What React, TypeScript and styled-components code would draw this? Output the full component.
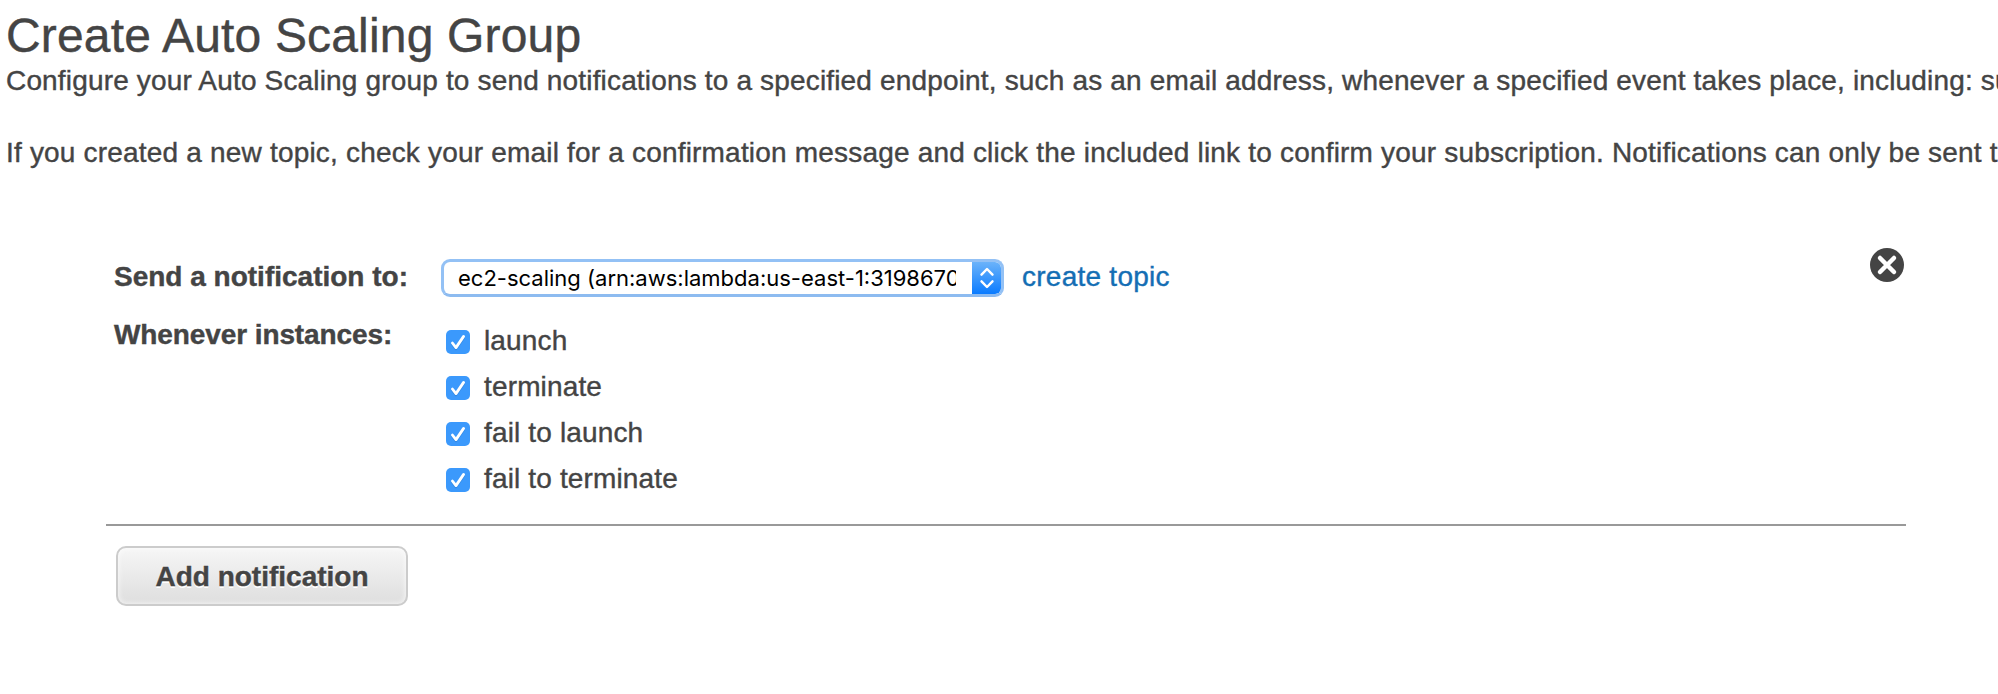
import React, { useState } from 'react';
import styled, { createGlobalStyle } from 'styled-components';

const GlobalStyle = createGlobalStyle`
  html, body { margin: 0; background: #fff; overflow: hidden; }
  * { box-sizing: border-box; }
  svg { display: block; }
`;

const Page = styled.main`
  width: 1998px;
  height: 694px;
  overflow: hidden;
  padding-left: 6px;
  color: #444;
  font: 28px/36px "Liberation Sans", Arial, sans-serif;
  -webkit-text-stroke: 0.4px;
`;

const Title = styled.h1`
  margin: 0;
  padding-top: 9px;
  height: 63px;
  font-size: 48px;
  line-height: 54px;
  font-weight: 400;
  letter-spacing: 0.17px;
  white-space: nowrap;
`;

const Paragraph = styled.p<{ $spacing: number }>`
  margin: 0 0 36px;
  white-space: nowrap;
  letter-spacing: ${(p) => p.$spacing}px;
`;

const Panel = styled.section`
  width: 1800px;
  height: 283px;
  margin: 72px 0 0 100px;
  padding: 15px 1px 0 8px;
  display: flex;
  align-items: flex-start;
  border-bottom: 2px solid #999;
`;

const Fields = styled.div`
  flex: 1;
  display: grid;
  grid-template-columns: 327px 1fr;
  grid-template-rows: 58px auto;
`;

const Label = styled.div<{ $spacing: number }>`
  font-weight: 700;
  padding-top: 1px;
  letter-spacing: ${(p) => p.$spacing}px;
  white-space: nowrap;
`;

const TopicRow = styled.div`
  display: flex;
  align-items: flex-start;
  height: 38px;
`;

const Select = styled.button`
  display: flex;
  width: 563px;
  height: 38px;
  margin-top: 1px;
  padding: 0;
  border: 3px solid #93c1f5;
  border-bottom-color: #8dbbf0;
  border-radius: 9px;
  background: #fff;
  color: #000;
  overflow: hidden;
  font: 22px/33px Inter, Roboto, sans-serif;
  text-align: left;
  -webkit-text-stroke: 0;
`;

const SelectText = styled.span`
  flex: 1;
  margin: 0 16px 0 14px;
  overflow: hidden;
  white-space: nowrap;
`;

const Stepper = styled.span`
  width: 29px;
  height: 32px;
  display: flex;
  align-items: center;
  justify-content: center;
  border-radius: 0 5px 5px 0;
  background: linear-gradient(#6bb3fa, #0a7bff);
`;

const Link = styled.a`
  margin: 1px 0 0 18px;
  color: #146eb4;
  letter-spacing: 0.25px;
  text-decoration: none;
  white-space: nowrap;
`;

const Options = styled.div`
  padding: 7px 0 0 5px;
`;

const Option = styled.label`
  display: flex;
  height: 46px;
  gap: 14px;
  letter-spacing: 0.15px;
`;

const HiddenInput = styled.input`
  appearance: none;
  margin: 0;
  width: 0;
  height: 0;
`;

const Box = styled.span<{ $on: boolean }>`
  width: 24px;
  height: 24px;
  margin: 7px 0 0 -14px;
  border-radius: 5px;
  background: ${(p) => (p.$on ? '#3b99fc' : '#ddd')};
`;

const Remove = styled.button`
  width: 36px;
  height: 36px;
  margin-top: -11px;
  padding: 0;
  border: 0;
  background: none;
`;

const AddButton = styled.button`
  display: block;
  width: 292px;
  height: 60px;
  margin: 20px 0 0 110px;
  padding: 1px 0 0;
  border: 2px solid #ccc;
  border-radius: 10px;
  background: linear-gradient(#f6f6f6, #dedede);
  box-shadow: inset 0 0 5px 1px rgba(255, 255, 255, 0.65);
  color: #444;
  font: 700 28px/55px "Liberation Sans", Arial, sans-serif;
  text-shadow: 0 2px 0 #fff;
`;

const events = ['launch', 'terminate', 'fail to launch', 'fail to terminate'];

function EventOption({ name }: { name: string }) {
  const [on, setOn] = useState(true);
  return (
    <Option>
      <HiddenInput type="checkbox" checked={on} onChange={() => setOn(!on)} />
      <Box $on={on}>
        <svg width="24" height="24" viewBox="0 0 24 24" fill="none" strokeWidth="2.8" strokeLinecap="round" strokeLinejoin="round">
          <path d="M6.4 14.2 10 18.8 17.6 7.6" stroke="#2b7bd0" strokeOpacity=".55" />
          <path d="M6.4 13 10 17.6 17.6 6.4" stroke="#fff" />
        </svg>
      </Box>
      {name}
    </Option>
  );
}

export default function App() {
  return (
    <Page>
      <GlobalStyle />
      <Title>Create Auto Scaling Group</Title>
      <Paragraph $spacing={0.165}>
        Configure your Auto Scaling group to send notifications to a specified endpoint, such as an email address, whenever a specified event takes place, including: su
      </Paragraph>
      <Paragraph $spacing={0.19}>
        If you created a new topic, check your email for a confirmation message and click the included link to confirm your subscription. Notifications can only be sent t
      </Paragraph>
      <Panel>
        <Fields>
          <Label $spacing={0}>Send a notification to:</Label>
          <TopicRow>
            <Select>
              <SelectText>ec2-scaling (arn:aws:lambda:us-east-1:3198670</SelectText>
              <Stepper>
                <svg width="16" height="22" viewBox="0 0 16 22" fill="none" stroke="#fff" strokeWidth="2.4" strokeLinecap="round" strokeLinejoin="round">
                  <path d="M2.5 7.7 8 2l5.5 5.7M2.5 14.3 8 20l5.5-5.7" />
                </svg>
              </Stepper>
            </Select>
            <Link>create topic</Link>
          </TopicRow>
          <Label $spacing={-0.1}>Whenever instances:</Label>
          <Options>
            {events.map((e) => (
              <EventOption key={e} name={e} />
            ))}
          </Options>
        </Fields>
        <Remove aria-label="Remove">
          <svg width="36" height="36" viewBox="0 0 36 36">
            <circle cx="18" cy="18" r="17" fill="#444" />
            <path d="M11 11 25 25M25 11 11 25" stroke="#fff" strokeWidth="4.5" strokeLinecap="round" />
          </svg>
        </Remove>
      </Panel>
      <AddButton>Add notification</AddButton>
    </Page>
  );
}
